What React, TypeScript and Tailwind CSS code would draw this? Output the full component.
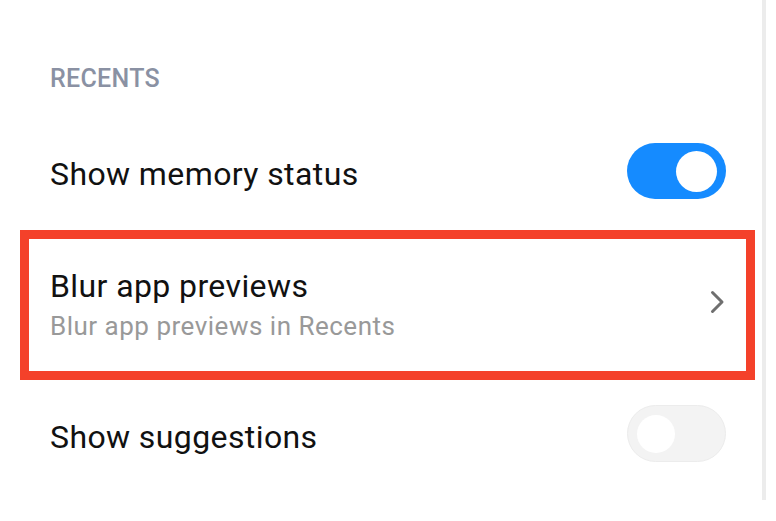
import React from 'react';

const font = { fontFamily: 'Roboto, "Noto Sans", Arial, sans-serif' };

// Toggle in the miui style: big pill, white knob
const Toggle = ({ on }: { on: boolean }) =>
  on ? (
    <div className="w-[99px] h-[56px] rounded-full bg-[#158bff] flex items-center justify-end pr-[9px] shrink-0">
      <div className="w-[41px] h-[41px] rounded-full bg-white" />
    </div>
  ) : (
    <div className="w-[99px] h-[57px] rounded-full bg-[#f3f3f3] border border-[#ececec] flex items-center pl-[9px] shrink-0">
      <div className="w-[38px] h-[38px] rounded-full bg-white" />
    </div>
  );

export default function App() {
  return (
    <div className="w-[776px] h-[521px] bg-white flex overflow-hidden" style={font}>
      <div className="ml-[20px] w-[735px] flex flex-col pt-[64px]">
        {/* section header */}
        <div className="pl-[30px] h-[30px] text-[25px] leading-[30px] font-medium tracking-[0.3px] text-[#8a91a3]">RECENTS</div>

        {/* Show memory status */}
        <div className="flex items-center justify-between pl-[30px] pr-[29px] pt-[49px] pb-[31px]">
          <span className="mt-[5px] text-[32px] leading-[36px] tracking-[0.4px] text-[#111111]">Show memory status</span>
          <Toggle on />
        </div>

        {/* highlighted row */}
        <div className="border-[9px] border-[#f4412a] flex items-center justify-between pl-[21px] pr-[21px] pt-[29px] pb-[30px]">
          <div className="flex flex-col">
            <span className="text-[32px] leading-[36px] tracking-[0.4px] text-[#111111]">Blur app previews</span>
            <span className="mt-[7px] text-[26px] leading-[30px] tracking-[0.5px] text-[#999999]">Blur app previews in Recents</span>
          </div>
          <svg width="15" height="24" viewBox="0 0 15 24" className="-mt-[6px] shrink-0">
            <path d="M2.5 2.5 L12 12 L2.5 21.5" fill="none" stroke="#6f6f6f" strokeWidth="3" strokeLinecap="round" strokeLinejoin="round" />
          </svg>
        </div>

        {/* Show suggestions */}
        <div className="flex items-center justify-between pl-[30px] pr-[29px] pt-[25px]">
          <span className="mt-[6px] text-[32px] leading-[36px] tracking-[0.4px] text-[#111111]">Show suggestions</span>
          <Toggle on={false} />
        </div>
      </div>

      {/* scroll strip */}
      <div className="ml-[7px] w-[4px] h-[500px] bg-[#ececec]" />
    </div>
  );
}
